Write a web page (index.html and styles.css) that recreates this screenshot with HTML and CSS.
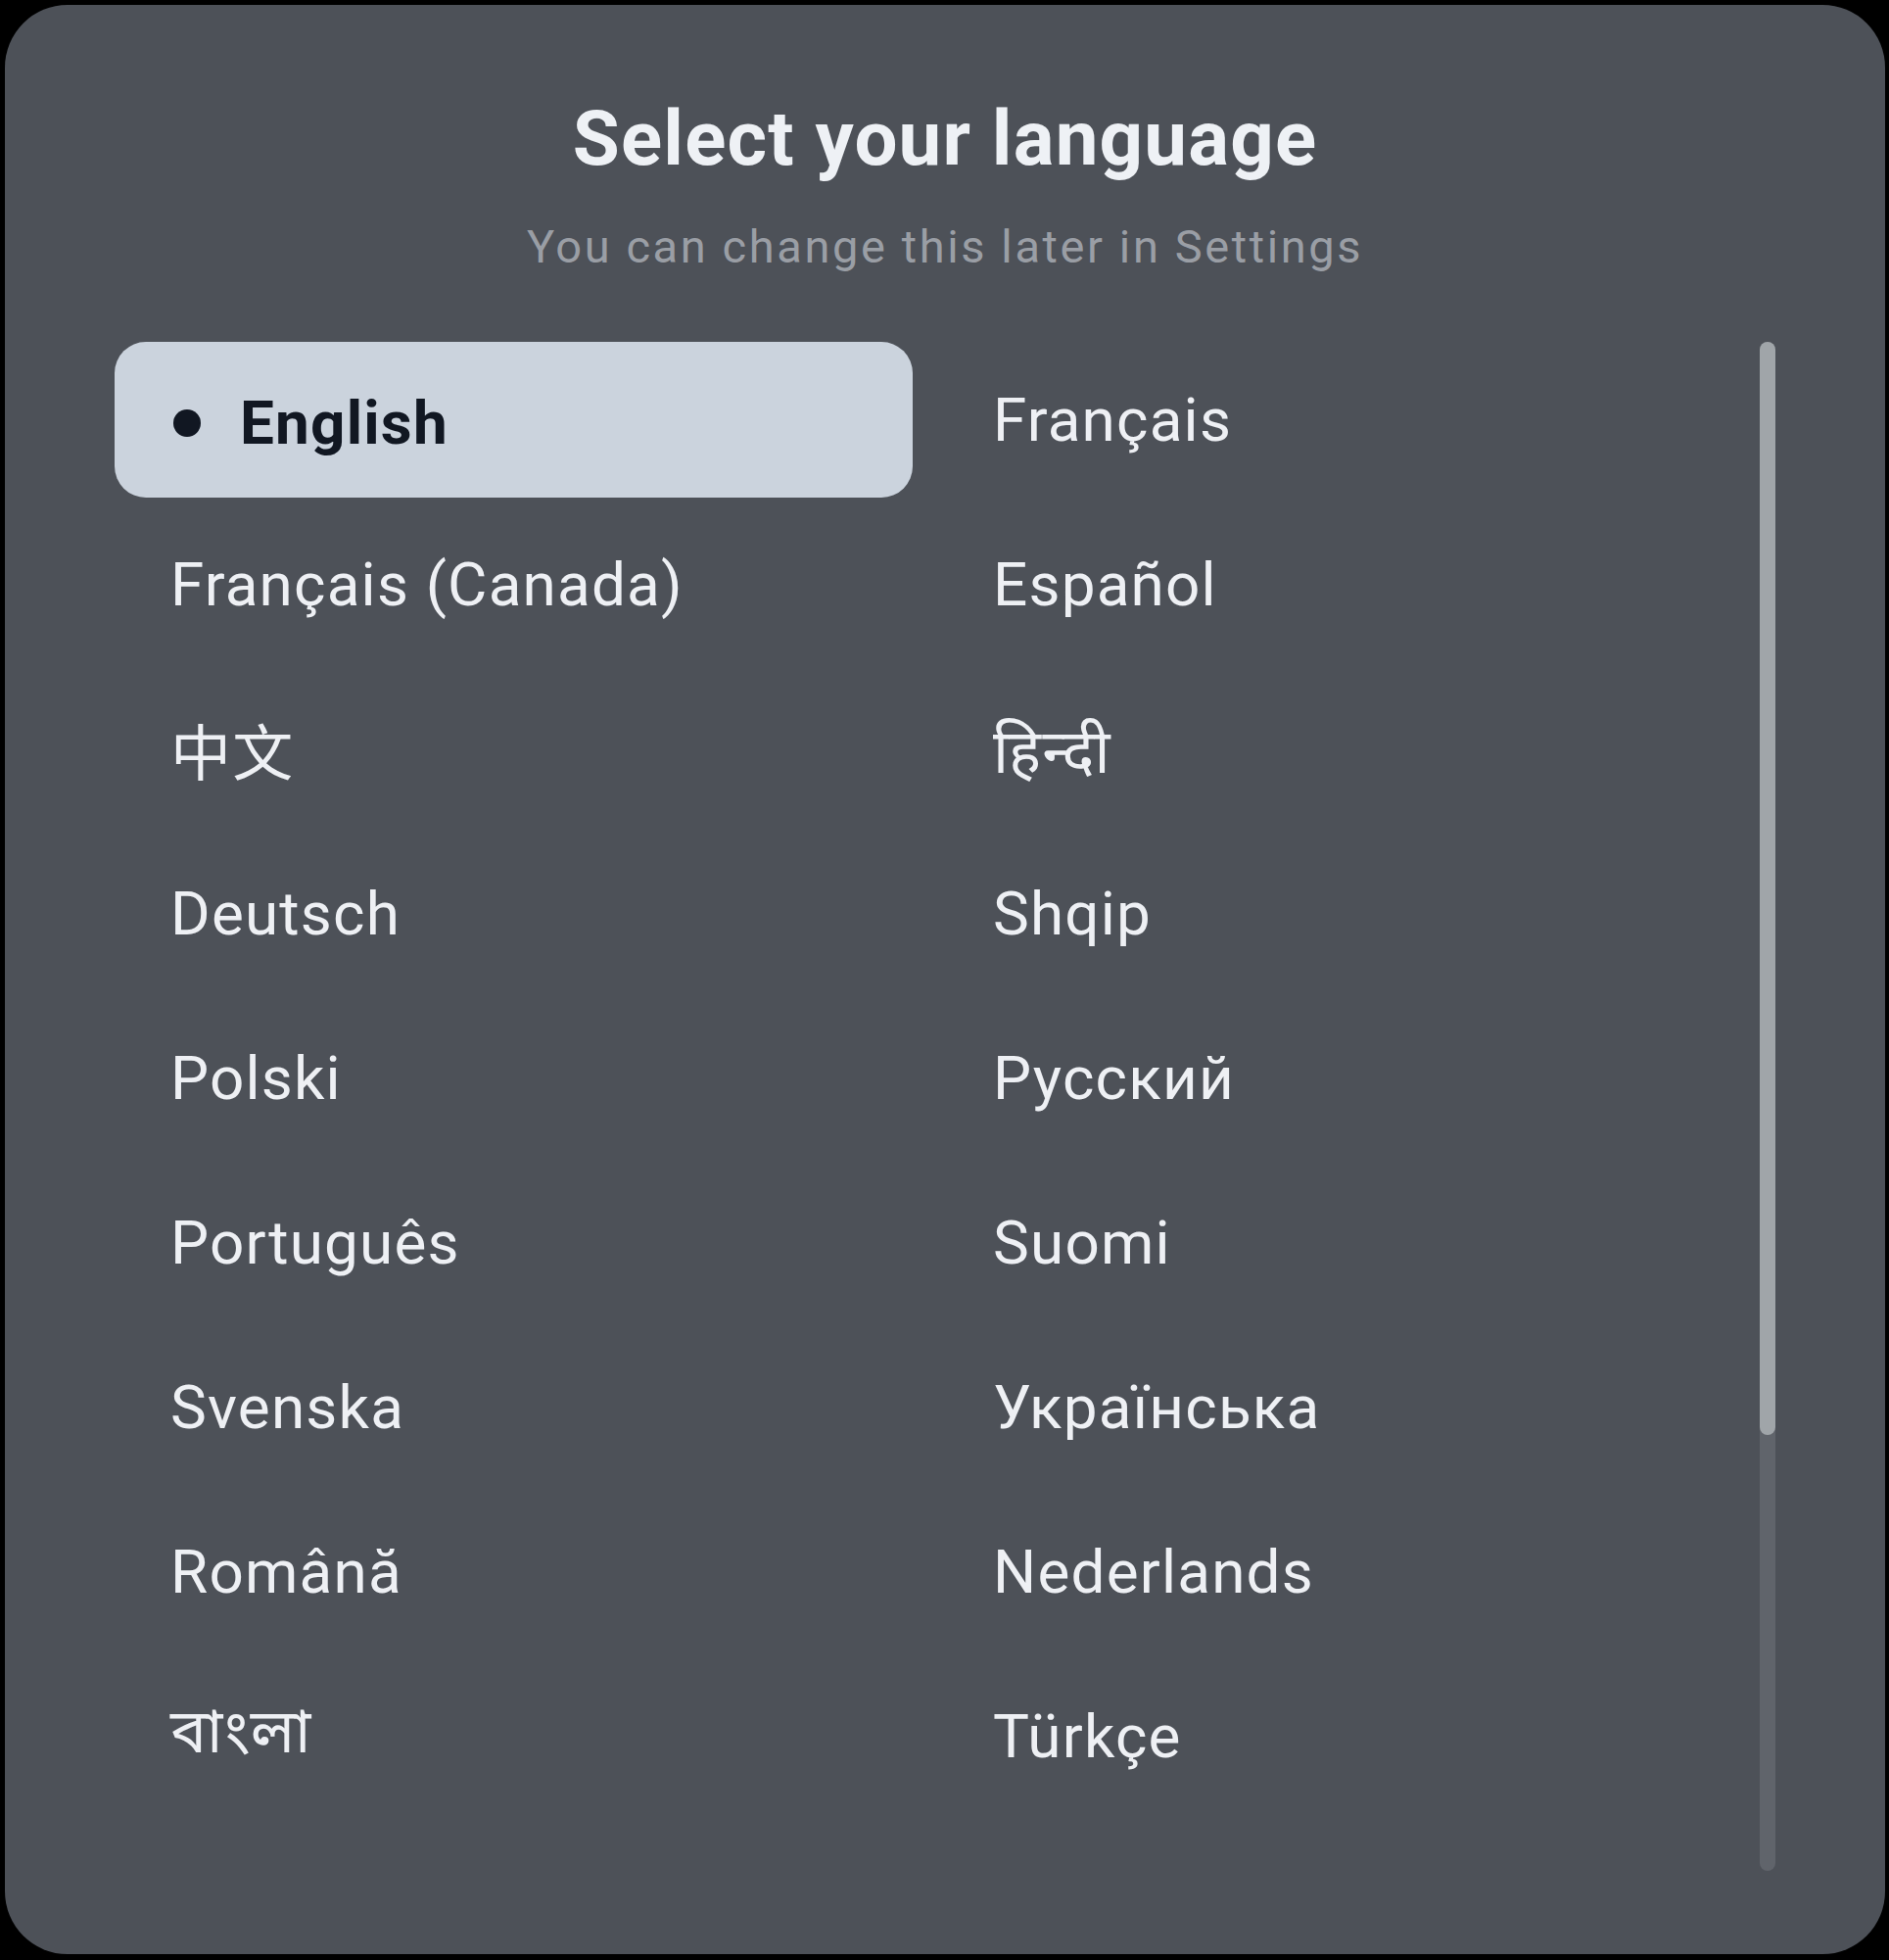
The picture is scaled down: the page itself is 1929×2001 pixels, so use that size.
FILE: index.html
```html
<!DOCTYPE html>
<html lang="en">
<head>
    <meta charset="UTF-8">
    <meta name="viewport" content="width=device-width, initial-scale=1.0">
    <title>Select your language</title>
    <link rel="stylesheet" href="styles.css">
</head>
<body>
    <div class="dialog">
        <h1>Select your language</h1>
        <p class="subtitle">You can change this later in Settings</p>

        <div class="list-wrap">
            <div class="language-list">
                <div class="language selected"><span class="dot"></span>English</div>
                <div class="language">Français</div>
                <div class="language">Français (Canada)</div>
                <div class="language">Español</div>
                <div class="language" lang="zh">中文</div>
                <div class="language" lang="hi">हिन्दी</div>
                <div class="language">Deutsch</div>
                <div class="language">Shqip</div>
                <div class="language">Polski</div>
                <div class="language">Русский</div>
                <div class="language">Português</div>
                <div class="language">Suomi</div>
                <div class="language">Svenska</div>
                <div class="language">Українська</div>
                <div class="language">Română</div>
                <div class="language">Nederlands</div>
                <div class="language" lang="bn">বাংলা</div>
                <div class="language">Türkçe</div>
            </div>
            <div class="scrollbar">
                <div class="scroll-thumb"></div>
            </div>
        </div>
    </div>
</body>
</html>
```

FILE: styles.css
```css
html, body {
    margin: 0;
    background-color: #000;
}
body {
    font-family: Roboto, "Noto Sans", "Noto Sans Devanagari", "Noto Sans Bengali", "Noto Sans CJK SC", sans-serif;
    padding: 5px;
}
.dialog {
    width: 1920px;
    height: 1990px;
    box-sizing: border-box;
    background-color: #4d5158;
    border-radius: 64px;
    padding: 98px 112px 88px;
}
h1 {
    margin: 0;
    font-size: 78px;
    line-height: 1;
    font-weight: 700;
    letter-spacing: 1.2px;
    color: #eef1f5;
    text-align: center;
}
.subtitle {
    margin: 47px 0 0;
    font-size: 47px;
    line-height: 1;
    letter-spacing: 2.6px;
    color: #9a9ea5;
    text-align: center;
}
.list-wrap {
    margin-top: 74px;
    display: flex;
    gap: 25px;
}
.language-list {
    flex: 1;
    display: grid;
    grid-template-columns: 1fr 1fr;
    grid-auto-rows: 159px;
    align-content: start;
    column-gap: 25px;
    row-gap: 9px;
}
.scrollbar {
    width: 16px;
    height: 1561px;
    background-color: #60646b;
    border-radius: 8px;
}
.scroll-thumb {
    height: 1116px;
    background-color: #a0a5a9;
    border-radius: 8px;
}
.language {
    display: flex;
    align-items: center;
    padding-left: 57px;
    border-radius: 32px;
    font-size: 62px;
    letter-spacing: 1.2px;
    color: #eef0f4;
}
.language.selected {
    background-color: #cbd3dd;
    color: #111722;
    font-weight: 700;
    padding-left: 60px;
    padding-top: 6px;
}
.dot {
    width: 28px;
    height: 28px;
    border-radius: 50%;
    background-color: #111722;
    margin-right: 40px;
}
```
